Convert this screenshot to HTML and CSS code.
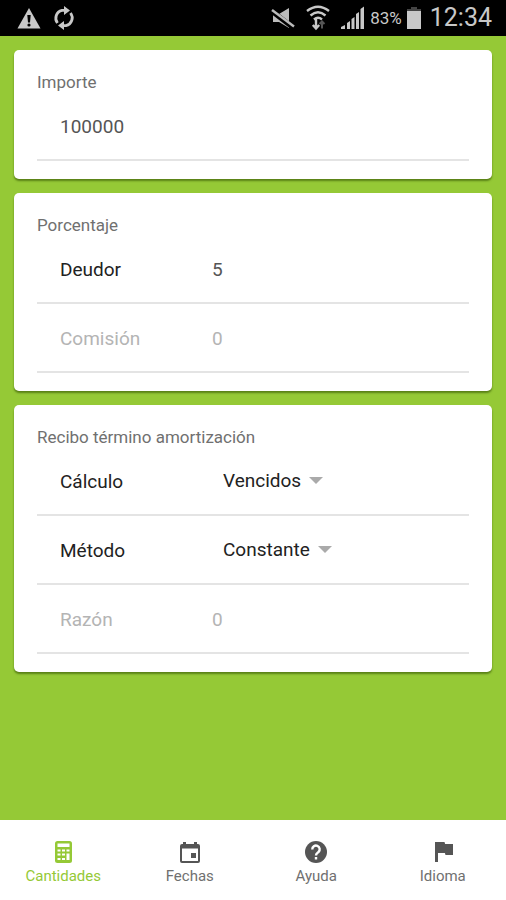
FILE: index.html
```html
<!DOCTYPE html>
<html lang="es">
<head>
<meta charset="utf-8">
<meta name="viewport" content="width=device-width, initial-scale=1">
<title>Cantidades</title>
<link rel="stylesheet" href="styles.css">
</head>
<body>
<header class="status">
  <div class="status-group">
    <svg width="24" height="22" viewBox="0 0 24 22"><path d="M12 1 23.500 21.500H.5z" fill="#c8c8c8"/><path d="M10.300 8h3.400l-.7 7.500h-2z" fill="#000"/><circle cx="12" cy="18" r="1.600" fill="#000"/></svg>
    <svg width="24" height="24" viewBox="0 0 24 24" fill="none" stroke="#c8c8c8" stroke-width="2.800"><path d="M5.500 17A8 8 0 0 1 10 4.300H13M18.500 7A8 8 0 0 1 14 19.700H11"/><path d="M12 0l6 4.500-6 4.500zM12 15l-6 4.500 6 4.500z" fill="#c8c8c8" stroke="none"/></svg>
  </div>
  <div class="status-group status-right">
    <svg width="24" height="22" viewBox="0 0 24 22"><path d="M2 7h6l10-6v20l-10-6H2z" fill="#bcbcbc"/><path d="M0 3.500 22 20.500" stroke="#000" stroke-width="5"/><path d="M1 3 23 19.500" stroke="#bcbcbc" stroke-width="2.400"/></svg>
    <svg class="wifi" width="24" height="26" viewBox="0 0 24 26" fill="none" stroke="#c8c8c8" stroke-width="2.400"><path d="M1 6q11-8.500 22 0M4.500 10.500q7.500-6.500 15 0M8 14.500q4-3.500 8 0"/><path d="M10 14v9M6.800 20 10 23.500l3.200-3.500"/><path d="M16 23.500v-7M13.500 19 16 16.500l2.500 2.500" stroke="#555" stroke-width="2"/></svg>
    <svg width="24" height="24" viewBox="0 0 24 24" fill="#c8c8c8"><path d="M0 23v-2l4-2v4zM6 17l3-2v8H6zM10.500 13l3-2v12h-3zM15 8l3-2v17h-3zM19.500 3l3.500-2.500V23h-3.500z"/></svg>
    <span class="battery-text">83%</span>
    <svg width="14" height="24" viewBox="0 0 14 24"><path d="M4 1h6v2h4v2H0V3h4z" fill="#444"/><path d="M0 5h14v18H0z" fill="#c8c8c8"/></svg>
    <time class="clock">12:34</time>
  </div>
</header>

<main class="content">
  <section class="card">
    <h2 class="card-title"><label for="importe">Importe</label></h2>
    <div class="row"><input class="field" id="importe" type="text" inputmode="numeric" value="100000"></div>
  </section>

  <section class="card">
    <h2 class="card-title">Porcentaje</h2>
    <div class="row"><label class="name" for="deudor">Deudor</label><input class="field" id="deudor" type="text" value="5"></div>
    <div class="row disabled"><label class="name" for="comision">Comisión</label><input class="field" id="comision" type="text" value="0" disabled></div>
  </section>

  <section class="card">
    <h2 class="card-title">Recibo término amortización</h2>
    <div class="row"><label class="name" for="calculo">Cálculo</label>
      <div class="picker"><select id="calculo"><option>Vencidos</option></select><svg width="14" height="7" viewBox="0 0 14 7"><path d="M0 0h14L7 7z"/></svg></div></div>
    <div class="row"><label class="name" for="metodo">Método</label>
      <div class="picker"><select id="metodo"><option>Constante</option></select><svg width="14" height="7" viewBox="0 0 14 7"><path d="M0 0h14L7 7z"/></svg></div></div>
    <div class="row disabled"><label class="name" for="razon">Razón</label><input class="field" id="razon" type="text" value="0" disabled></div>
  </section>
</main>

<nav class="tabs">
  <a class="tab active" href="#cantidades">
    <svg width="24" height="24" viewBox="0 0 24 24"><rect x="4" y="1" width="17" height="22" rx="2.500" fill="currentColor"/><path d="M6.500 3.500h12V7h-12zM6.500 9.500h3v2h-3zM11 9.500h3v2h-3zM15.500 9.500h3v2h-3zM6.500 13.500h3v2h-3zM11 13.500h3v2h-3zM15.500 13.500h3v6.500h-3zM6.500 18h3v2h-3zM11 18h3v2h-3z" fill="#fff"/></svg>
    <span>Cantidades</span>
  </a>
  <a class="tab" href="#fechas">
    <svg width="24" height="24" viewBox="0 0 24 24"><path d="M5 2h3v2h8V2h3v2h1a2 2 0 0 1 2 2v15a2 2 0 0 1-2 2H4a2 2 0 0 1-2-2V6a2 2 0 0 1 2-2h1zM4 8.500V21h16V8.500z" fill="currentColor" fill-rule="evenodd"/><path d="M13 13h5v5h-5z" fill="currentColor"/></svg>
    <span>Fechas</span>
  </a>
  <a class="tab" href="#ayuda">
    <svg width="24" height="24" viewBox="0 0 24 24"><circle cx="12" cy="12" r="11" fill="currentColor"/><path d="M8.300 9.500a3.700 3.700 0 1 1 6.200 2.500c-1.500 1.300-2.500 1.700-2.500 3.500" fill="none" stroke="#fff" stroke-width="2.400"/><path d="M10.800 17h2.400v2.400h-2.400z" fill="#fff"/></svg>
    <span>Ayuda</span>
  </a>
  <a class="tab" href="#idioma">
    <svg width="24" height="24" viewBox="0 0 24 24"><path d="M4 2h9.500l.6 2H22v11h-7.500l-.6-2H7v9H4z" fill="currentColor"/></svg>
    <span>Idioma</span>
  </a>
</nav>
</body>
</html>
```
FILE: styles.css
```css
* {
  box-sizing: border-box;
}

body {
  margin: 0;
  min-height: 100vh;
  display: flex;
  flex-direction: column;
  background: #95c936;
  color: #222;
  font-family: Roboto, "Liberation Sans", sans-serif;
  font-size: 19px;
}

svg {
  display: block;
  flex: none;
}

.status {
  display: flex;
  justify-content: space-between;
  height: 36px;
  padding: 0 14px 0 17px;
  background: #000;
  color: #c8c8c8;
}

.status-group {
  display: flex;
  align-items: center;
  gap: 11px;
}

.status-right {
  gap: 5px;
}

.wifi {
  margin: 0 6px;
}

.battery-text {
  font-size: 17px;
}

.clock {
  margin-left: 4px;
  font-size: 25px;
  line-height: 38px;
}

.content {
  flex: 1;
  display: flex;
  flex-direction: column;
  gap: 14px;
  padding: 14px;
}

.card {
  padding: 23px 23px 18px;
  border-radius: 5px;
  background: #fff;
  box-shadow: 0 2px 2px rgba(50, 80, 0, 0.6);
}

.card-title {
  margin: 0;
  color: #707070;
  font-size: 17px;
  font-weight: 400;
  line-height: 19px;
}

.row {
  display: flex;
  align-items: center;
  height: 69px;
  padding: 2px 0 0 23px;
  border-bottom: 2px solid #e4e4e4;
}

.name {
  flex: none;
  width: 152px;
}

.field {
  flex: 1;
  min-width: 0;
  padding: 0;
  border: 0;
  background: none;
  color: #555;
  font: inherit;
}

.disabled,
.disabled .field {
  color: #b4b4b4;
}

.picker {
  display: flex;
  align-items: center;
  gap: 8px;
  padding: 0 0 2px 11px;
}

.picker select {
  field-sizing: content;
  appearance: none;
  padding: 0;
  border: 0;
  background: none;
  color: #222;
  font: inherit;
}

.picker svg {
  fill: #aaa;
}

.tabs {
  display: flex;
  height: 80px;
  background: #fff;
}

.tab {
  flex: 1;
  display: flex;
  flex-direction: column;
  align-items: center;
  gap: 2px;
  padding-top: 20px;
  color: #707070;
  font-size: 15px;
  line-height: 20px;
  text-decoration: none;
}

.tab svg {
  color: #555;
}

.active,
.active svg {
  color: #95c936;
}
```
